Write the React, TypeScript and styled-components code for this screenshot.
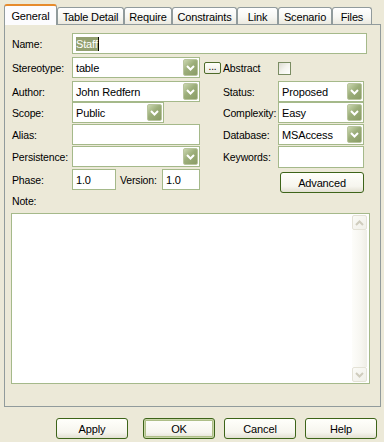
import React from "react";
import styled, { createGlobalStyle } from "styled-components";

const GlobalStyle = createGlobalStyle`
  html, body {
    margin: 0;
    padding: 0;
    background: #ece9d8;
  }
  body {
    font-family: "Liberation Sans", Arial, sans-serif;
    font-size: 10.5px;
    letter-spacing: -0.15px;
    color: #000;
  }
`;

const Window = styled.div`
  box-sizing: border-box;
  width: 384px;
  height: 442px;
  padding: 4px 4px 0 4px;
  background: #ece9d8;
  display: flex;
  flex-direction: column;
`;

const TabStrip = styled.div`
  display: flex;
  align-items: flex-end;
  height: 20px;
  position: relative;
  z-index: 1;
`;

const Tab = styled.div<{ $w: number; $active?: boolean }>`
  box-sizing: border-box;
  width: ${(p) => p.$w}px;
  height: ${(p) => (p.$active ? 21 : 17)}px;
  margin-bottom: ${(p) => (p.$active ? -1 : 0)}px;
  padding-top: ${(p) => (p.$active ? 0 : 1)}px;
  border: 1px solid #919b9c;
  border-bottom: none;
  border-top: ${(p) => (p.$active ? "2px solid #e68b2c" : "1px solid #919b9c")};
  border-radius: 3px 3px 0 0;
  display: flex;
  align-items: center;
  justify-content: center;
  white-space: nowrap;
  font-size: 11px;
  background: ${(p) =>
    p.$active
      ? "#fcfcfe"
      : "linear-gradient(#ffffff, #f7f7f3 55%, #ebe9df)"};
`;

const Panel = styled.div`
  box-sizing: border-box;
  width: 377px;
  height: 383px;
  border: 1px solid #919b9c;
  background: #ece9d8;
  padding: 8px 0 0 5px;
`;

const Form = styled.div`
  display: grid;
  grid-template-columns: 62px 128px 22px 56px 86px 3px;
  grid-template-rows: 24px 24px 21px 22px 22px 23px 24px;
  align-items: start;
`;

const Label = styled.span<{ $col?: number; $row: number }>`
  grid-column: ${(p) => p.$col ?? 1};
  grid-row: ${(p) => p.$row};
  height: 21px;
  display: flex;
  align-items: center;
  padding-left: ${(p) => (p.$col ? 1 : 2)}px;
  white-space: nowrap;
`;

const Cell = styled.div<{ $col: string | number; $row: number }>`
  grid-column: ${(p) => p.$col};
  grid-row: ${(p) => p.$row};
  display: flex;
  align-items: center;
`;

const TextBox = styled.div<{ $w?: number; $h?: number }>`
  box-sizing: border-box;
  width: ${(p) => (p.$w ? `${p.$w}px` : "100%")};
  height: ${(p) => p.$h ?? 21}px;
  border: 1px solid #a5b98a;
  background: #fff;
  display: flex;
  align-items: center;
  padding-left: 3px;
  white-space: nowrap;
  font-size: 11px;
`;

const Selected = styled.span`
  background: #93a070;
  color: #fff;
  padding: 1px 0;
  border-right: 1px solid #000;
`;

const ComboBox = styled.div<{ $w?: number }>`
  box-sizing: border-box;
  width: ${(p) => (p.$w ? `${p.$w}px` : "100%")};
  height: 21px;
  border: 1px solid #a5b98a;
  background: #fff;
  display: flex;
  align-items: center;
  padding: 0 1px 0 3px;
  font-size: 11px;
`;

const ComboText = styled.span`
  flex: 1;
  white-space: nowrap;
`;

const DropButton = styled.span`
  box-sizing: border-box;
  width: 15px;
  height: 17px;
  border-radius: 2px;
  border: 1px solid #b9c59e;
  background: linear-gradient(135deg, #cbd7b0, #9cae7a 45%, #8a9c66);
  display: flex;
  align-items: center;
  justify-content: center;
`;

const DotsButton = styled.span`
  box-sizing: border-box;
  width: 17px;
  height: 12px;
  margin: 1px 0 0 4px;
  border: 1px solid #4e6b2a;
  border-radius: 2px;
  background: linear-gradient(#fffffa, #ecebe2);
  display: flex;
  align-items: flex-end;
  justify-content: center;
  font-size: 10px;
  line-height: 8px;
  padding-bottom: 2px;
`;

const CheckBox = styled.span`
  box-sizing: border-box;
  width: 13px;
  height: 13px;
  margin-top: 1px;
  border: 1px solid #7a8c62;
  background: linear-gradient(135deg, #dcdbd2, #f4f4ee 50%, #ffffff);
`;

const Inline = styled.div`
  display: flex;
  align-items: center;
  width: 100%;
`;

const InlineLabel = styled.span`
  width: 46px;
  padding-left: 4px;
  box-sizing: border-box;
  white-space: nowrap;
`;

const XPButton = styled.div<{ $w?: number; $default?: boolean; $gapAfter?: number }>`
  box-sizing: border-box;
  width: ${(p) => p.$w ?? 72}px;
  height: 21px;
  margin-right: ${(p) => p.$gapAfter ?? 0}px;
  border: 1px solid #3d6419;
  border-radius: 3px;
  background: linear-gradient(#fffffb, #f6f5ee 70%, #e2e0d2);
  box-shadow: ${(p) =>
    p.$default ? "inset 0 0 0 1px #c9d6a8, inset 0 0 0 2px #aebe88" : "none"};
  display: flex;
  align-items: center;
  justify-content: center;
  font-size: 11px;
`;

const NoteLabel = styled.div`
  height: 16px;
  padding-left: 2px;
  display: flex;
  align-items: center;
`;

const NoteBox = styled.div`
  box-sizing: border-box;
  width: 359px;
  height: 171px;
  margin: 4px 0 0 1px;
  border: 1px solid #a5b98a;
  background: #fff;
  display: flex;
  justify-content: flex-end;
  padding: 1px 2px 1px 0;
`;

const ScrollBar = styled.div`
  width: 15px;
  display: flex;
  flex-direction: column;
`;

const ScrollTrack = styled.div`
  flex: 1;
  background: linear-gradient(90deg, #fdfdfa, #f7f6f1 60%, #eeede5);
`;

const ScrollArrow = styled.div`
  box-sizing: border-box;
  width: 15px;
  height: 15px;
  border: 1px solid #e4e2d6;
  border-radius: 2px;
  background: linear-gradient(135deg, #fbfbf7, #f0efe8);
  display: flex;
  align-items: center;
  justify-content: center;
`;

const ButtonRow = styled.div`
  display: flex;
  justify-content: flex-end;
  gap: 9px;
  margin-top: 11px;
  padding-right: 3px;
`;

const Chevron = ({ up, color }: { up?: boolean; color: string }) => (
  <svg width="9" height="6" viewBox="0 0 9 6">
    <polyline
      points={up ? "1,5 4.5,1.5 8,5" : "1,1 4.5,4.5 8,1"}
      fill="none"
      stroke={color}
      strokeWidth="2"
    />
  </svg>
);

const Combo = ({ value, w }: { value?: string; w?: number }) => (
  <ComboBox $w={w}>
    <ComboText>{value}</ComboText>
    <DropButton>
      <Chevron color="#ffffff" />
    </DropButton>
  </ComboBox>
);

const tabs = [
  { name: "General", w: 53 },
  { name: "Table Detail", w: 67 },
  { name: "Require", w: 48 },
  { name: "Constraints", w: 65 },
  { name: "Link", w: 41 },
  { name: "Scenario", w: 54 },
  { name: "Files", w: 40 },
];

export default function App() {
  return (
    <>
      <GlobalStyle />
      <Window>
        <TabStrip>
          {tabs.map((t, i) => (
            <Tab key={t.name} $w={t.w} $active={i === 0}>
              {t.name}
            </Tab>
          ))}
        </TabStrip>
        <Panel>
          <Form>
            <Label $row={1}>Name:</Label>
            <Cell $col="2 / 7" $row={1}>
              <TextBox>
                <Selected>Staff</Selected>
              </TextBox>
            </Cell>

            <Label $row={2}>Stereotype:</Label>
            <Cell $col={2} $row={2}>
              <Combo value="table" />
            </Cell>
            <Cell $col={3} $row={2} style={{ height: 21 }}>
              <DotsButton>...</DotsButton>
            </Cell>
            <Label $col={4} $row={2}>Abstract</Label>
            <Cell $col={5} $row={2} style={{ height: 21 }}>
              <CheckBox />
            </Cell>

            <Label $row={3}>Author:</Label>
            <Cell $col={2} $row={3}>
              <Combo value="John Redfern" />
            </Cell>
            <Label $col={4} $row={3}>Status:</Label>
            <Cell $col={5} $row={3}>
              <Combo value="Proposed" />
            </Cell>

            <Label $row={4}>Scope:</Label>
            <Cell $col={2} $row={4}>
              <Combo value="Public" w={92} />
            </Cell>
            <Label $col={4} $row={4}>Complexity:</Label>
            <Cell $col={5} $row={4}>
              <Combo value="Easy" />
            </Cell>

            <Label $row={5}>Alias:</Label>
            <Cell $col={2} $row={5}>
              <TextBox />
            </Cell>
            <Label $col={4} $row={5}>Database:</Label>
            <Cell $col={5} $row={5}>
              <Combo value="MSAccess" />
            </Cell>

            <Label $row={6}>Persistence:</Label>
            <Cell $col={2} $row={6}>
              <Combo />
            </Cell>
            <Label $col={4} $row={6}>Keywords:</Label>
            <Cell $col={5} $row={6}>
              <TextBox $h={22} />
            </Cell>

            <Label $row={7}>Phase:</Label>
            <Cell $col={2} $row={7}>
              <Inline>
                <TextBox $w={44}>1.0</TextBox>
                <InlineLabel>Version:</InlineLabel>
                <TextBox $w={38}>1.0</TextBox>
              </Inline>
            </Cell>
            <Cell $col={5} $row={7}>
              <XPButton $w={84} style={{ marginTop: 3, marginLeft: 2 }}>
                Advanced
              </XPButton>
            </Cell>
          </Form>
          <NoteLabel>Note:</NoteLabel>
          <NoteBox>
            <ScrollBar>
              <ScrollArrow>
                <Chevron up color="#cfccbd" />
              </ScrollArrow>
              <ScrollTrack />
              <ScrollArrow>
                <Chevron color="#cfccbd" />
              </ScrollArrow>
            </ScrollBar>
          </NoteBox>
        </Panel>
        <ButtonRow>
          <XPButton $gapAfter={6}>Apply</XPButton>
          <XPButton $default>OK</XPButton>
          <XPButton>Cancel</XPButton>
          <XPButton>Help</XPButton>
        </ButtonRow>
      </Window>
    </>
  );
}
